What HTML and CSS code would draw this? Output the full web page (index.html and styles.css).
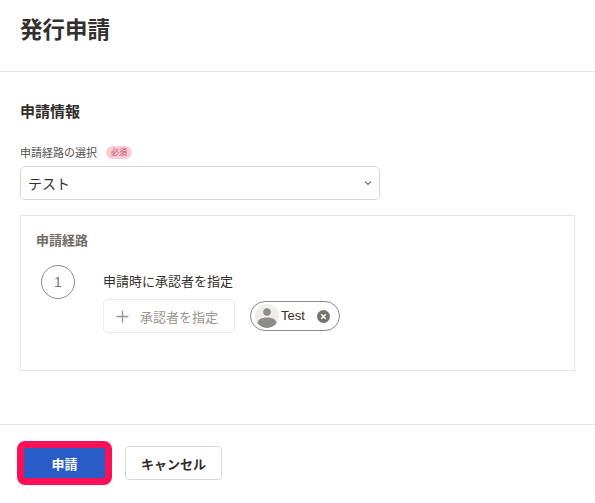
FILE: index.html
```html
<!DOCTYPE html>
<html lang="ja">
<head>
<meta charset="utf-8">
<title>発行申請</title>
<link rel="stylesheet" href="styles.css">
</head>
<body>
<header class="header"><h1 class="title">発行申請</h1></header>
<main class="content">
  <h2 class="section-title">申請情報</h2>
  <div class="label-row"><span class="label">申請経路の選択</span><span class="badge">必須</span></div>
  <div class="select"><span>テスト</span>
    <svg class="chevron" width="8" height="6" viewBox="0 0 8 6"><path d="M1 1.5 4 4.5 7 1.5" fill="none" stroke="#777" stroke-width="1.2"/></svg>
  </div>
  <section class="route">
    <h3 class="route-title">申請経路</h3>
    <div class="step">
      <div class="step-num">1</div>
      <div class="step-body">
        <div class="step-label">申請時に承認者を指定</div>
        <div class="step-actions">
          <button class="add-btn" type="button">
            <svg width="13" height="13" viewBox="0 0 13 13"><path d="M6.5 0.5v12M0.5 6.5h12" stroke="#999" stroke-width="1.4" fill="none"/></svg>
            <span>承認者を指定</span>
          </button>
          <div class="chip">
            <span class="avatar"><svg width="24" height="24" viewBox="0 0 24 24"><circle cx="12" cy="12" r="12" fill="#eeedeb"/><circle cx="12" cy="8" r="3.800" fill="#8f8c88"/><path d="M2.500 19.500c0-4 4-6 9.500-6s9.500 2 9.500 6c-2 2.800-5.500 4.500-9.500 4.500s-7.500-1.700-9.500-4.500z" fill="#8f8c88"/></svg></span>
            <span class="chip-name">Test</span>
            <svg class="chip-x" width="13" height="13" viewBox="0 0 13 13"><circle cx="6.500" cy="6.500" r="6.500" fill="#77736f"/><path d="M4.300 4.300l4.400 4.400M8.700 4.300l-4.400 4.400" stroke="#fff" stroke-width="1.600"/></svg>
          </div>
        </div>
      </div>
    </div>
  </section>
</main>
<footer class="footer">
  <button class="primary" type="button">申請</button>
  <button class="secondary" type="button">キャンセル</button>
</footer>
</body>
</html>
```
FILE: styles.css
```css
* { box-sizing: border-box; }
html, body { margin: 0; padding: 0; }
body {
  width: 595px;
  height: 503px;
  overflow: hidden;
  background: #fff;
  color: #2f2c29;
  font-family: "Liberation Sans", "Noto Sans CJK JP", sans-serif;
}
.header { height: 72px; padding: 16px 20px 0; border-bottom: 1px solid #e5e5e5; }
.title { margin: 0; font-size: 22.500px; line-height: 30px; font-weight: 700; color: #33302d; }
.content { height: 353px; padding: 30px 20px 0; border-bottom: 1px solid #e5e5e5; }
.section-title { margin: 0; font-size: 15px; line-height: 20px; font-weight: 700; color: #2f2c29; }
.label-row { display: flex; align-items: center; gap: 9px; margin-top: 21px; height: 18px; }
.label { font-size: 11px; color: #55514d; }
.badge {
  width: 26px; height: 13px; border-radius: 7px; background: #f9cdd5; color: #c9475f;
  font-size: 8px; line-height: 13px; text-align: center;
}
.select {
  position: relative; display: flex; align-items: center; justify-content: space-between;
  width: 360px; height: 34px; margin-top: 5px; padding: 0 7px 1px 7px;
  border: 1px solid #d9d9d9; border-radius: 5px; font-size: 14px; color: #33302d;
}
.route { width: 555px; height: 156px; margin-top: 15px; padding: 16px 15px 0; border: 1px solid #e5e5e5; }
.route-title { margin: 0; font-size: 13px; line-height: 18px; font-weight: 700; color: #6f6b66; }
.step { display: flex; margin-top: 15px; }
.step-num {
  width: 34px; height: 34px; margin-left: 5px; border: 1px solid #8c8985; border-radius: 50%;
  display: flex; align-items: center; justify-content: center; font-size: 14px; color: #77736f;
}
.step-body { margin-left: 28px; padding-top: 8px; }
.step-label { font-size: 13px; line-height: 18px; color: #33302d; }
.step-actions { display: flex; align-items: center; gap: 15px; margin-top: 8px; }
.add-btn {
  display: flex; align-items: center; gap: 11px; width: 132px; height: 34px; padding: 0 0 0 12px;
  background: #fff; border: 1px solid #ececec; border-radius: 4px; font: inherit; font-size: 13px; color: #99958f;
}
.chip {
  display: flex; align-items: center; width: 90px; height: 30px; padding: 0 9px 0 4px;
  border: 1px solid #8c8985; border-radius: 15px;
}
.avatar { width: 24px; height: 24px; flex: none; display: block; border-radius: 50%; overflow: hidden; }
.avatar svg { display: block; }
.chip-name { margin-left: 2px; margin-top: -2px; font-size: 13px; color: #33302d; }
.chip-x { margin-left: auto; }
.footer { display: flex; align-items: center; gap: 13px; padding: 16px 17px 0; }
.primary {
  width: 95px; height: 44px; background: #2a5cc8; color: #fff; font: inherit; font-size: 13px; font-weight: 700;
  border: 7px solid #fc1058; border-radius: 8px; padding: 0;
}
.secondary {
  width: 97px; height: 34px; background: #fff; color: #2f2c29; font: inherit; font-size: 13px; font-weight: 700;
  border: 1px solid #d9d9d9; border-radius: 4px; padding: 0;
}
```
